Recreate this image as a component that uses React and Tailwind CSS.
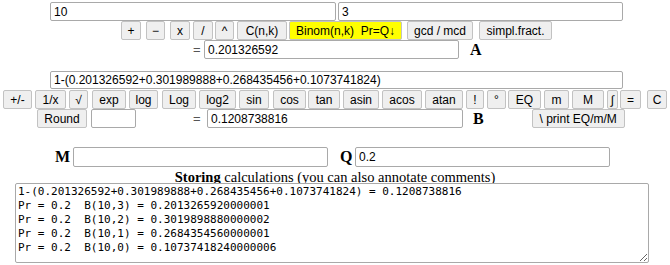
import React from "react";

function Btn({ className = "", children }) {
  return (
    <button
      type="button"
      className={
        "h-[19px] shrink-0 flex items-center justify-center p-0 border border-[#c2c2c2] rounded-[2px] bg-[#efefef] text-[12px] leading-none text-black whitespace-nowrap " +
        className
      }
    >
      {children}
    </button>
  );
}

function Field({ className = "", value = "" }) {
  return (
    <input
      readOnly
      value={value}
      className={
        "shrink-0 border border-[#a9a9a9] rounded-[2px] bg-white px-[3px] text-[12px] leading-none text-black outline-none " +
        className
      }
    />
  );
}

const log = [
  "1-(0.201326592+0.301989888+0.268435456+0.1073741824) = 0.1208738816",
  "Pr = 0.2  B(10,3) = 0.2013265920000001",
  "Pr = 0.2  B(10,2) = 0.3019898880000002",
  "Pr = 0.2  B(10,1) = 0.2684354560000001",
  "Pr = 0.2  B(10,0) = 0.10737418240000006",
].join("\n");

export default function App() {
  return (
    <div className="w-[670px] h-[265px] overflow-hidden bg-white text-black text-[12px] font-['Liberation_Sans',Arial,sans-serif]">
      {/* operands */}
      <div className="flex pt-[2px] pl-[50px]">
        <Field className="w-[286px] h-[19px]" value="10" />
        <Field className="ml-[2px] w-[285px] h-[19px]" value="3" />
      </div>

      {/* binary operations */}
      <div className="flex">
        <Btn className="ml-[121px] w-[20px]">+</Btn>
        <Btn className="ml-[5px] w-[19px]">−</Btn>
        <Btn className="ml-[5px] w-[20px]">x</Btn>
        <Btn className="ml-[3px] w-[20px]">/</Btn>
        <Btn className="ml-[2px] w-[19px]">^</Btn>
        <Btn className="ml-[3px] w-[50px]">C(n,k)</Btn>
        <Btn className="ml-[2px] w-[113px] bg-[#ffff00]">{"Binom(n,k)\u00a0\u00a0Pr=Q↓"}</Btn>
        <Btn className="ml-[5px] w-[66px]">gcd / mcd</Btn>
        <Btn className="ml-[6px] w-[73px]">simpl.fract.</Btn>
      </div>

      {/* result A */}
      <div className="flex items-center h-[19px]">
        <span className="ml-[193px] w-[8px] text-[#555] text-[13px] leading-none">=</span>
        <Field className="ml-[3px] w-[255px] h-[19px]" value="0.201326592" />
        <span className="ml-[11px] font-['Liberation_Serif',serif] font-bold text-[16px] leading-none">A</span>
      </div>

      {/* expression */}
      <div className="flex mt-[12px] pl-[50px]">
        <Field
          className="w-[573px] h-[18px]"
          value="1-(0.201326592+0.301989888+0.268435456+0.1073741824)"
        />
      </div>

      {/* unary operations */}
      <div className="flex mt-[1px]">
        <Btn className="ml-[3px] w-[29px]">+/-</Btn>
        <Btn className="ml-[3px] w-[31px]">1/x</Btn>
        <Btn className="ml-[3px] w-[19px]">√</Btn>
        <Btn className="ml-[4px] w-[34px]">exp</Btn>
        <Btn className="ml-[3px] w-[29px]">log</Btn>
        <Btn className="ml-[4px] w-[34px]">Log</Btn>
        <Btn className="ml-[3px] w-[37px]">log2</Btn>
        <Btn className="ml-[3px] w-[30px]">sin</Btn>
        <Btn className="ml-[4px] w-[33px]">cos</Btn>
        <Btn className="ml-[2px] w-[32px]">tan</Btn>
        <Btn className="ml-[3px] w-[36px]">asin</Btn>
        <Btn className="ml-[3px] w-[40px]">acos</Btn>
        <Btn className="ml-[3px] w-[38px]">atan</Btn>
        <Btn className="ml-[3px] w-[18px]">!</Btn>
        <Btn className="ml-[3px] w-[19px]">°</Btn>
        <Btn className="ml-[2px] w-[33px]">EQ</Btn>
        <Btn className="ml-[3px] w-[25px]">m</Btn>
        <Btn className="ml-[3px] w-[32px]">M</Btn>
        <Btn className="ml-[3px] w-[11px]">∫</Btn>
        <Btn className="ml-[2px] w-[21px]">=</Btn>
        <Btn className="ml-[6px] w-[20px]">C</Btn>
      </div>

      {/* result B */}
      <div className="flex items-center">
        <Btn className="ml-[37px] w-[50px]">Round</Btn>
        <Field className="ml-[4px] w-[45px] h-[19px]" />
        <span className="ml-[57px] w-[8px] text-[#555] text-[13px] leading-none">=</span>
        <Field className="ml-[6px] w-[256px] h-[19px]" value="0.1208738816" />
        <span className="ml-[10px] font-['Liberation_Serif',serif] font-bold text-[16px] leading-none">B</span>
        <Btn className="ml-[48px] w-[93px]">\ print EQ/m/M</Btn>
      </div>

      {/* memories */}
      <div className="flex items-center mt-[19px] h-[20px]">
        <span className="ml-[55px] w-[15px] font-['Liberation_Serif',serif] font-bold text-[16px] leading-none">M</span>
        <Field className="ml-[3px] w-[255px] h-[20px]" />
        <span className="ml-[12px] w-[13px] font-['Liberation_Serif',serif] font-bold text-[16px] leading-none">Q</span>
        <Field className="ml-[2px] w-[255px] h-[20px]" value="0.2" />
      </div>

      <div className="mt-[3px] h-[13px] leading-[14px] text-center text-[14.5px] font-['Liberation_Serif',serif]">
        <b>Storing</b> calculations (you can also annotate comments)
      </div>

      <div className="flex">
        <textarea
          readOnly
          value={log}
          className="ml-[15px] w-[634px] h-[80px] border border-[#a9a9a9] rounded-[2px] bg-white px-[2px] py-[1px] text-[11px] leading-[14px] text-black whitespace-pre font-['DejaVu_Sans_Mono',monospace] outline-none resize"
        />
      </div>
    </div>
  );
}
